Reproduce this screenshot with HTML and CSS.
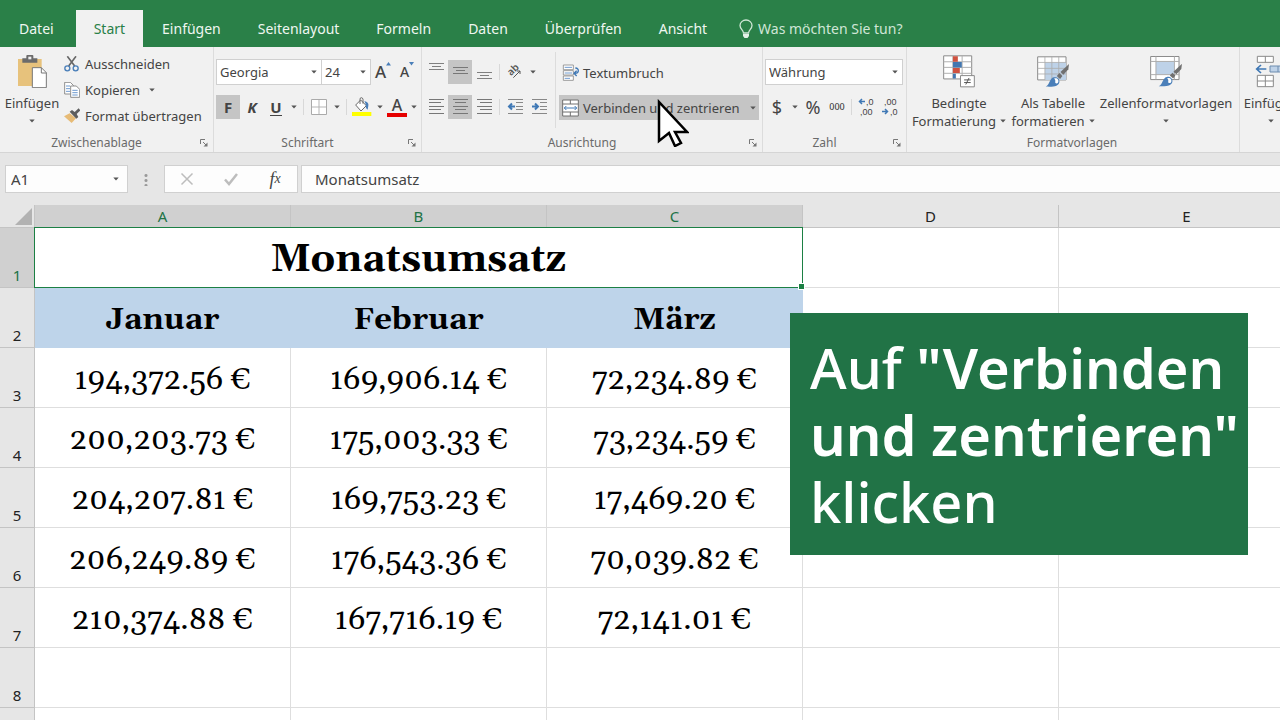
FILE: index.html
```html
<!DOCTYPE html>
<html lang="de">
<head>
<meta charset="utf-8">
<title>Monatsumsatz</title>
<link rel="stylesheet" href="styles.css">
</head>
<body>
<svg class="defs" aria-hidden="true">
  <symbol id="caret" viewBox="0 0 6 4"><path d="M0.3 0.5h5.4L3 3.6z" fill="#555"/></symbol>
  <symbol id="launcher" viewBox="0 0 8 8"><path d="M.5 5V.5H5M3 3l3 3" fill="none" stroke="#777"/><path d="M7.5 3.5v4h-4z" fill="#777"/></symbol>
  <symbol id="brush" viewBox="0 0 72 72"><path d="M71 0L69 16 54 32 45 24z" fill="#707070"/><path d="M42 27l9 9-7 9-10-9z" fill="#707070"/><path d="M0 68C14 63 11 43 25 40c10-2 18 5 17 14C40 66 25 70 0 68z" fill="#4a7fb9"/><path d="M26 44c8-4 16 4 12 12-3 4-7 3-9 0 1-6 1-8-3-12z" fill="#fff"/></symbol>
</svg>
<header>
  <nav class="tabs">
    <a href="#" class="tab tab-file">Datei</a>
    <a href="#" class="tab tab-active">Start</a>
    <a href="#" class="tab">Einfügen</a>
    <a href="#" class="tab">Seitenlayout</a>
    <a href="#" class="tab">Formeln</a>
    <a href="#" class="tab">Daten</a>
    <a href="#" class="tab">Überprüfen</a>
    <a href="#" class="tab">Ansicht</a>
    <button class="tell-me"><svg width="14" height="20" viewBox="0 0 14 20"><path d="M4.5 14C4.5 11 1 10 1 6.500a6 5.500 0 0 1 12 0C13 10 9.500 11 9.500 14z" fill="none" stroke="#cfe6d6" stroke-width="1.300"/><path d="M4 15h6v2L8.500 19h-3L4 17z" fill="#e4f2e8"/></svg>Was möchten Sie tun?</button>
  </nav>

  <div class="ribbon">
    <section class="group group-clipboard">
      <div class="group-body">
        <button class="big big-paste">
          <svg width="30" height="33" viewBox="57 165 90 99"><path d="M60 177h71v81H60z" fill="#e7c27c"/><path d="M73 175h12v-8q0-2 3-2h15q3 0 3 2v8h12v13H73z" fill="#6b6b6b"/><path d="M91 170h9v8h-9z" fill="#f0f0f0"/><path d="M103 203h27l15 15v45h-42z" fill="#fff" stroke="#777" stroke-width="3"/><path d="M130 203v16h15" fill="none" stroke="#777" stroke-width="3"/></svg>
          <span>Einfügen</span><svg class="caret"><use href="#caret"/></svg>
        </button>
        <div class="stack">
          <button class="row-btn"><svg width="16" height="16" viewBox="195 166 48 48"><path d="M205 167l22 29M231 167l-22 29" stroke="#666" stroke-width="5" fill="none"/><circle cx="205" cy="203" r="7.500" fill="none" stroke="#4a7fb9" stroke-width="4"/><circle cx="230" cy="203" r="7.500" fill="none" stroke="#4a7fb9" stroke-width="4"/></svg>Ausschneiden</button>
          <button class="row-btn"><svg width="16" height="16" viewBox="195 244 48 48"><g fill="#fff" stroke="#7a7a7a" stroke-width="2.500"><path d="M197 245h17l9 9v26h-26z"/><path d="M215 256h17l10 10v24h-27z"/></g><path d="M201 256h12M201 264h12M201 272h12M220 269h16M220 276h16M220 283h16" stroke="#6f9bd0" stroke-width="3"/></svg>Kopieren<svg class="caret caret-gap"><use href="#caret"/></svg></button>
          <button class="row-btn"><svg width="16" height="16" viewBox="195 325 48 48"><path d="M195 350l17-9 19 15-13 14z" fill="#e7bb76"/><path d="M212 336l7-5 8 6 12-11 5 6-11 11 5 9-6 5z" fill="#5e5e5e"/></svg>Format übertragen</button>
        </div>
      </div>
      <footer class="group-foot"><span>Zwischenablage</span><button class="launch" aria-label="Zwischenablage öffnen"><svg width="8" height="8"><use href="#launcher"/></svg></button></footer>
    </section>

    <section class="group group-font">
      <div class="group-body lines">
        <div class="line">
          <span class="combo combo-font"><select aria-label="Schriftart"><option>Georgia</option></select><svg class="caret"><use href="#caret"/></svg></span>
          <span class="combo combo-size"><select aria-label="Schriftgrad"><option>24</option></select><svg class="caret"><use href="#caret"/></svg></span>
          <button class="tool grow"><b>A</b><svg width="5" height="4" viewBox="0 0 5 4"><path d="M0 3.500h5L2.500 0z" fill="#4a7fb9"/></svg></button>
          <button class="tool shrink"><b>A</b><svg width="5" height="4" viewBox="0 0 5 4"><path d="M0 0h5L2.500 3.500z" fill="#4a7fb9"/></svg></button>
        </div>
        <div class="line">
          <button class="tool on"><b>F</b></button>
          <button class="tool"><b><i>K</i></b></button>
          <button class="tool"><b class="under">U</b></button>
          <button class="drop" aria-label="Unterstreichen"><svg class="caret"><use href="#caret"/></svg></button>
          <i class="sep"></i>
          <button class="tool" aria-label="Rahmen"><svg width="16" height="16" viewBox="0 0 16 16"><path d="M.5.5h15v15H.5z" fill="#fff" stroke="#aaa"/><path d="M8 1v14M1 8h14" stroke="#b5b5b5"/></svg></button>
          <button class="drop" aria-label="Rahmenauswahl"><svg class="caret"><use href="#caret"/></svg></button>
          <i class="sep"></i>
          <button class="tool" aria-label="Füllfarbe"><svg width="20" height="20" viewBox="424 142 60 60"><path d="M435 166l15-15 17 17-16 16z" fill="#fff" stroke="#6b6b6b" stroke-width="3"/><path d="M448 163v-14q0-5 4-5t5 5v13" fill="none" stroke="#6b6b6b" stroke-width="3"/><path d="M461 154q14 3 12 14l-2 12-5-5-1-12z" fill="#4a7fb9"/><path d="M424 187h58v12h-58z" fill="#ff0"/></svg></button>
          <button class="drop" aria-label="Füllfarbe wählen"><svg class="caret"><use href="#caret"/></svg></button>
          <button class="tool font-color"><b>A</b></button>
          <button class="drop" aria-label="Schriftfarbe wählen"><svg class="caret"><use href="#caret"/></svg></button>
        </div>
      </div>
      <footer class="group-foot"><span>Schriftart</span><button class="launch" aria-label="Schriftart öffnen"><svg width="8" height="8"><use href="#launcher"/></svg></button></footer>
    </section>

    <section class="group group-align">
      <div class="group-body">
        <div class="lines align-tools">
          <div class="line">
            <button class="tool" aria-label="Oben"><svg width="15" height="18"><path d="M0 .5h15M3 3.500h9M0 6.500h15" stroke="#808080"/></svg></button>
            <button class="tool on" aria-label="Mitte"><svg width="15" height="18"><path d="M0 4.500h15M3 7.500h9M0 10.500h15" stroke="#777"/></svg></button>
            <button class="tool" aria-label="Unten"><svg width="15" height="18"><path d="M0 9.500h15M3 12.500h9M0 15.500h15" stroke="#808080"/></svg></button>
            <i class="sep"></i>
            <button class="tool" aria-label="Ausrichtung"><svg width="16" height="14" viewBox="264 42 48 42"><text x="0" y="0" transform="translate(276 76) rotate(-45)" class="orient">ab</text><path d="M283 80l20-20m-9 0h9v9" fill="none" stroke="#555" stroke-width="3"/></svg></button>
            <button class="drop" aria-label="Ausrichtung wählen"><svg class="caret"><use href="#caret"/></svg></button>
          </div>
          <div class="line">
            <button class="tool" aria-label="Linksbündig"><svg width="15" height="18"><path d="M0 1.500h15M0 4.500h12M0 8.500h15M0 11.500h12M0 15.500h15" stroke="#777"/></svg></button>
            <button class="tool on" aria-label="Zentriert"><svg width="15" height="18"><path d="M0 1.500h15M2 4.500h11M0 8.500h15M2 11.500h11M0 15.500h15" stroke="#777"/></svg></button>
            <button class="tool" aria-label="Rechtsbündig"><svg width="15" height="18"><path d="M0 1.500h15M3 4.500h12M0 8.500h15M3 11.500h12M0 15.500h15" stroke="#777"/></svg></button>
            <i class="sep"></i>
            <button class="tool" aria-label="Einzug verkleinern"><svg width="17" height="18"><path d="M1 1.500h15M9 4.500h7M9 8.500h7M9 11.500h7M1 15.500h15" stroke="#888"/><path d="M8 8.500H2m3-3L2 8.500l3 3" stroke="#3f78b5" stroke-width="2" fill="none"/></svg></button>
            <button class="tool" aria-label="Einzug vergrößern"><svg width="17" height="18"><path d="M1 1.500h15M9 4.500h7M9 8.500h7M9 11.500h7M1 15.500h15" stroke="#888"/><path d="M1 8.500h6M4 5.500l3 3-3 3" stroke="#3f78b5" stroke-width="2" fill="none"/></svg></button>
          </div>
        </div>
        <div class="lines wrap-tools">
          <button class="row-btn wide"><svg width="18" height="18" viewBox="426 40 54 54"><path d="M430 43h30v14h-30zM430 60h30v13h-30zM430 76h30v13h-30z" fill="#fff" stroke="#8a8a8a" stroke-width="2.500"/><path d="M434 50h22M434 67h22M434 83h16" stroke="#6f9bd0" stroke-width="3"/><path d="M466 52q10 1 9 9-1 8-12 7m7-8l-8 8 8 8" fill="none" stroke="#3f78b5" stroke-width="4"/></svg>Textumbruch</button>
          <button class="row-btn wide on"><svg width="18" height="18" viewBox="426 144 54 54"><path d="M428 147h47v48h-47z" fill="#fff" stroke="#707070" stroke-width="3"/><path d="M428 159h47M428 183h47M451 147v12M451 183v12" stroke="#707070" stroke-width="3"/><path d="M433 171h37m-31-6l-6 6 6 6m25-12l6 6-6 6" fill="none" stroke="#3f78b5" stroke-width="3"/></svg>Verbinden und zentrieren<svg class="caret caret-end"><use href="#caret"/></svg></button>
        </div>
      </div>
      <footer class="group-foot"><span>Ausrichtung</span><button class="launch" aria-label="Ausrichtung öffnen"><svg width="8" height="8"><use href="#launcher"/></svg></button></footer>
    </section>

    <section class="group group-number">
      <div class="group-body lines">
        <div class="line"><span class="combo combo-number"><select aria-label="Zahlenformat"><option>Währung</option></select><svg class="caret"><use href="#caret"/></svg></span></div>
        <div class="line">
          <button class="tool sign">$</button>
          <button class="drop" aria-label="Währung wählen"><svg class="caret"><use href="#caret"/></svg></button>
          <button class="tool sign">%</button>
          <button class="tool thousands">000</button>
          <i class="sep"></i>
          <button class="tool" aria-label="Dezimalstelle hinzufügen"><svg width="17" height="20" viewBox="0 0 17 20" class="decimals"><text x="8" y="8">,0</text><text x="2" y="18">,00</text><path d="M7 4.500H1.500M4 2L1.500 4.500 4 7" stroke="#3f78b5" stroke-width="1.500" fill="none"/></svg></button>
          <button class="tool" aria-label="Dezimalstelle entfernen"><svg width="17" height="20" viewBox="0 0 17 20" class="decimals"><text x="2" y="8">,00</text><text x="8" y="18">,0</text><path d="M0 14.500h5.500M3 12L5.500 14.500 3 17" stroke="#3f78b5" stroke-width="1.500" fill="none"/></svg></button>
        </div>
      </div>
      <footer class="group-foot"><span>Zahl</span><button class="launch" aria-label="Zahl öffnen"><svg width="8" height="8"><use href="#launcher"/></svg></button></footer>
    </section>

    <section class="group group-styles">
      <div class="group-body">
        <button class="big big-cond">
          <svg width="32" height="33" viewBox="132 14 97 99"><path d="M134 16h85v70h-85z" fill="#fff" stroke="#8a8a8a" stroke-width="3"/><path d="M134 34h85M134 51h85M134 69h85M162 16v70M190 16v70" stroke="#b0b0b0" stroke-width="3"/><path d="M162 17h15v17h-15zM162 53h21v15h-21z" fill="#cf5240"/><path d="M162 35h27v16h-27zM162 70h9v15h-9z" fill="#4377b0"/><path d="M185 76h42v34h-42z" fill="#fff" stroke="#888" stroke-width="3"/><path d="M196 89h20M196 97h20M211 83l-10 20" stroke="#555" stroke-width="3"/></svg>
          <span>Bedingte</span><span>Formatierung<svg class="caret"><use href="#caret"/></svg></span>
        </button>
        <button class="big big-table">
          <svg width="32" height="33" viewBox="411 17 97 99"><path d="M413 22h86v70h-86z" fill="#fff" stroke="#8a8a8a" stroke-width="3"/><path d="M435 39h64v53h-64z" fill="#bed2e8"/><path d="M413 39h86M413 57h86M413 74h86M435 22v70M456 22v70M477 22v70" stroke="#adadad" stroke-width="2.500"/><use href="#brush" x="437" y="44" width="72" height="72"/></svg>
          <span>Als Tabelle</span><span>formatieren<svg class="caret"><use href="#caret"/></svg></span>
        </button>
        <button class="big big-cell">
          <svg width="32" height="33" viewBox="750 12 97 99"><path d="M752 16h86v70h-86z" fill="#fff" stroke="#8a8a8a" stroke-width="3"/><path d="M768 31h56v40h-56z" fill="#bed2e8"/><path d="M752 31h86M752 71h86M768 16v70M824 16v70" stroke="#adadad" stroke-width="3"/><use href="#brush" x="776" y="38" width="72" height="72"/></svg>
          <span>Zellenformatvorlagen</span><svg class="caret"><use href="#caret"/></svg>
        </button>
      </div>
      <footer class="group-foot foot-plain"><span>Formatvorlagen</span></footer>
    </section>

    <section class="group group-cells">
      <div class="group-body">
        <button class="big big-insert">
          <svg width="32" height="33" viewBox="1066 12 96 99"><g fill="#fff" stroke="#8a8a8a" stroke-width="3"><path d="M1073 16h48v18h-48zM1073 73h48v34h-48z"/><path d="M1097 16v18M1097 73v34M1073 90h48"/></g><path d="M1111 45h48v18h-48z" fill="#bed2e8" stroke="#6d8caf" stroke-width="3"/><path d="M1135 45v18" stroke="#6d8caf" stroke-width="3"/><path d="M1100 54h-28m12-12l-13 12 13 12" fill="none" stroke="#3f78b5" stroke-width="5"/></svg>
          <span>Einfügen</span><svg class="caret"><use href="#caret"/></svg>
        </button>
      </div>
    </section>
  </div>

  <div class="formula-bar">
    <span class="combo name-box"><input aria-label="Namenfeld" value="A1"><svg class="caret"><use href="#caret"/></svg></span>
    <span class="grip"></span>
    <div class="formula-tools">
      <button aria-label="Abbrechen"><svg width="14" height="14"><path d="M1.500 1.500l11 11M12.500 1.500l-11 11" stroke="#bdbdbd" stroke-width="1.500"/></svg></button>
      <button aria-label="Eingeben"><svg width="14" height="14"><path d="M1 7.500l4 4.500L13 2" fill="none" stroke="#bdbdbd" stroke-width="2.500"/></svg></button>
      <button class="fx">f<small>x</small></button>
    </div>
    <input class="formula" aria-label="Bearbeitungsleiste" value="Monatsumsatz">
  </div>
</header>

<main class="sheet">
  <table>
    <colgroup><col class="col-head"><col><col><col><col><col></colgroup>
    <thead>
      <tr><th class="corner"><svg width="18" height="18"><path d="M18 0v17H1z" fill="#b2b2b2"/></svg></th><th class="sel">A</th><th class="sel">B</th><th class="sel">C</th><th>D</th><th>E</th></tr>
    </thead>
    <tbody>
      <tr><th class="sel">1</th><td colspan="3" class="title">Monatsumsatz</td><td></td><td></td></tr>
      <tr class="months"><th>2</th><td>Januar</td><td>Februar</td><td>März</td><td class="plain"></td><td class="plain"></td></tr>
      <tr><th>3</th><td>194,372.56 €</td><td>169,906.14 €</td><td>72,234.89 €</td><td></td><td></td></tr>
      <tr><th>4</th><td>200,203.73 €</td><td>175,003.33 €</td><td>73,234.59 €</td><td></td><td></td></tr>
      <tr><th>5</th><td>204,207.81 €</td><td>169,753.23 €</td><td>17,469.20 €</td><td></td><td></td></tr>
      <tr><th>6</th><td>206,249.89 €</td><td>176,543.36 €</td><td>70,039.82 €</td><td></td><td></td></tr>
      <tr><th>7</th><td>210,374.88 €</td><td>167,716.19 €</td><td>72,141.01 €</td><td></td><td></td></tr>
      <tr><th>8</th><td></td><td></td><td></td><td></td><td></td></tr>
      <tr><th></th><td></td><td></td><td></td><td></td><td></td></tr>
    </tbody>
  </table>
</main>

<aside class="callout">Auf <b>"Verbinden<br>und zentrieren"</b><br>klicken</aside>
<svg class="pointer" width="32" height="48" viewBox="0 0 32 48"><path d="M2 3v39l10-8 6 13 6-3-6-11h12z" fill="#fff" stroke="#000" stroke-width="2.500"/></svg>
</body>
</html>
```
FILE: styles.css
```css
* { box-sizing: border-box; }
body {
  display: flex;
  flex-direction: column;
  margin: 0;
  height: 100vh;
  overflow: hidden;
  background: #fff;
  color: #444;
  font: 13px/18px "Noto Sans", "Open Sans", sans-serif;
}
button, select, input { font: inherit; color: inherit; border: 0; margin: 0; padding: 0; background: none; }
button { display: flex; align-items: center; white-space: nowrap; }
svg { display: block; flex: none; }
.defs { position: absolute; width: 0; height: 0; }
.caret { width: 6px; height: 4px; }

/* Tabs */
.tabs { display: flex; height: 47px; padding-top: 10px; background: #2a8048; }
.tab {
  display: flex; align-items: center; padding: 0 18px 0 19px;
  color: #eff7f1; font-size: 14px; text-decoration: none;
}
.tab-file { padding: 0 22px 0 19px; }
.tab-active { background: #f1f1f1; color: #2a8048; padding: 0 18px; }
.tell-me { gap: 5px; margin-left: 14px; color: #cfe6d6; font-size: 14px; }

/* Ribbon */
.ribbon { display: flex; height: 106px; background: #f1f1f1; border-bottom: 1px solid #d5d5d5; overflow: hidden; }
.group { display: flex; flex-direction: column; flex: none; padding-top: 5px; }
.group + .group { border-left: 1px solid #dcdcdc; }
.group-clipboard { width: 213px; }
.group-font { width: 208px; }
.group-align { width: 341px; }
.group-number { width: 144px; }
.group-styles { width: 333px; }
.group-cells { flex: 1 0 70px; }
.group-body { display: flex; flex: 1; }
.group-foot { display: flex; align-items: center; height: 20px; padding-top: 2px; color: #6a6a6a; font-size: 12px; }
.group-foot span { flex: 1; text-align: center; padding-right: 7px; }
.foot-plain span { padding-right: 2px; }
.launch { width: 13px; }
.big { flex-direction: column; flex: none; padding-top: 3px; }
.big > svg:first-child { margin-bottom: 6px; }
.big > .caret { margin-top: 7px; }
.big span { display: flex; align-items: center; gap: 4px; }
.big-paste { width: 64px; }
.big-cond { width: 104px; }
.big-table { width: 84px; }
.big-cell { width: 142px; }
.big-insert { width: 62px; }
.stack { display: flex; flex-direction: column; gap: 8px; padding-top: 3px; }
.row-btn { height: 18px; gap: 5px; }
.caret-gap { margin-left: 4px; }
.lines { display: flex; flex-direction: column; gap: 9px; padding-top: 7px; }
.group-font .group-body, .group-number .group-body { padding-left: 2px; }
.line { display: flex; align-items: center; height: 26px; }
.tool { width: 24px; height: 24px; justify-content: center; flex: none; font-size: 15px; }
.on { background: #c5c5c5; }
.drop { width: 12px; height: 24px; justify-content: center; flex: none; }
.sep { width: 1px; height: 16px; margin: 0 2px; background: #d8d8d8; flex: none; }
.group-font .sep { margin: 0 3px; }
.under { border-bottom: 1px solid #444; line-height: 16px; }
.grow { font-size: 17px; }
.shrink { font-size: 14px; }
.grow svg, .shrink svg { align-self: flex-start; margin-top: 2px; }
.grow b, .shrink b, .font-color b { font-weight: 500; }
.font-color { width: 22px; }
.font-color b { width: 20px; height: 20px; line-height: 17px; border-bottom: 4px solid #e60000; font-size: 16px; }
.combo { display: flex; align-items: center; height: 26px; background: #fff; border: 1px solid #d0d0d0; padding-right: 4px; }
.combo select, .combo input { flex: 1; min-width: 0; height: 100%; padding: 0 3px; appearance: none; outline: 0; }
.combo-font { width: 106px; }
.combo-size { width: 49px; border-left: 0; }
.combo-number { width: 138px; }
.align-tools { padding-left: 2px; width: 133px; }
.align-tools .sep { margin: 0 3px; }
.wrap-tools { gap: 10px; padding-left: 3px; border-left: 1px solid #dcdcdc; margin-bottom: 4px; }
.wide { width: 200px; height: 25px; margin-top: 1px; padding: 0 3px; gap: 3px; }
.wide + .wide { margin-top: 0; }
.caret-end { margin-left: auto; }
.orient { font: 600 30px "Noto Sans", sans-serif; fill: #555; }
.align-tools svg, .decimals { overflow: visible; }
.sign { font-size: 18px; }
.thousands { font-size: 9px; font-weight: 500; }
.decimals { font: 9px "Liberation Sans", sans-serif; fill: #444; }

/* Formula bar */
.formula-bar { display: flex; align-items: center; height: 52px; padding-left: 5px; background: #e6e6e6; font-size: 15px; }
.name-box { width: 123px; height: 28px; padding-right: 8px; background: #fdfdfd; }
.name-box input { padding: 0 5px; }
.grip { width: 36px; height: 13px; background: radial-gradient(circle, #999 1px, transparent 2px) center top / 36px 5px; }
.formula-tools { display: flex; width: 134px; height: 28px; background: #fdfdfd; border: 1px solid #d0d0d0; }
.formula-tools button { flex: 1; justify-content: center; }
.formula-tools .fx { font: italic 18px "Liberation Serif", serif; }
.fx small { font-size: 14px; }
.formula { flex: 1; height: 28px; margin-left: 3px; padding-left: 13px; background: #fdfdfd; border: 1px solid #d0d0d0; border-right: 0; }

/* Sheet */
.sheet { flex: 1; min-height: 0; overflow: hidden; }
table { width: 1315px; min-width: 100%; table-layout: fixed; border-spacing: 0; color: #000; }
.col-head { width: 35px; }
th { background: #e6e6e6; font-size: 15px; font-weight: 400; color: #222; padding: 0; border-right: 1px solid #c4c4c4; border-bottom: 1px solid #c4c4c4; }
thead th { height: 23px; line-height: 20px; }
tbody th { vertical-align: bottom; padding-bottom: 3px; }
th.sel { background: #d0d0d0; color: #217346; }
.corner svg { margin: 2px 0 0 14px; }
td {
  height: 60px; padding: 5px 0 0; text-align: center;
  border-right: 1px solid #dedede; border-bottom: 1px solid #dedede;
  font: 31px/40px Gelasio, "Liberation Serif", serif;
}
.months td { background: #bed4ea; border-color: #bed4ea; font-weight: 700; }
.months .plain { background: none; border-color: #dedede; }
td.title { position: relative; font-size: 39px; font-weight: 700; border-color: #1c8044; }
.title::before { content: ""; position: absolute; inset: -1px; border: 1px solid #1c8044; }
.title::after { content: ""; position: absolute; right: -2px; bottom: -2px; width: 5px; height: 5px; background: #1c8044; outline: 1px solid #fff; }

/* Overlays */
.callout {
  position: absolute; left: 790px; top: 313px; padding: 21px 9px 20px 20px;
  background: #217346; color: #fff; font-size: 56px; line-height: 67px; font-weight: 500; white-space: nowrap;
}
.callout b { font-weight: 600; }
.pointer { position: absolute; left: 657px; top: 99px; }
```
